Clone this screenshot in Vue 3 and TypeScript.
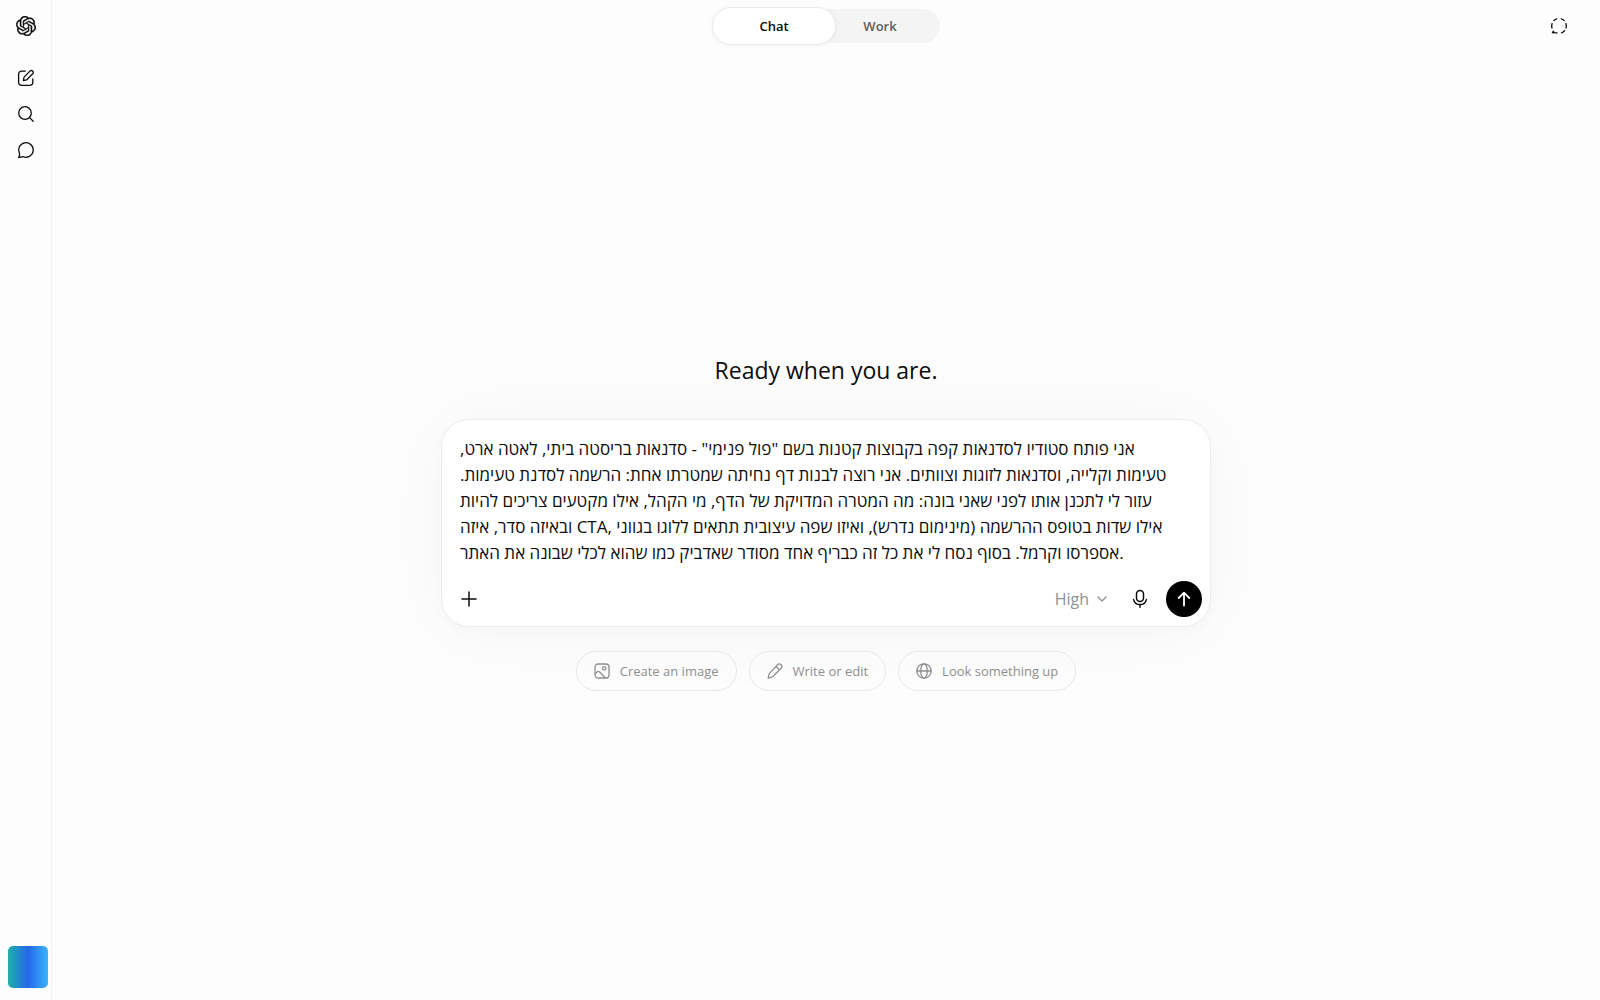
<script setup lang="ts">
import { ref } from 'vue'

type Mode = 'Chat' | 'Work'

const modes: Mode[] = ['Chat', 'Work']
const mode = ref<Mode>('Chat')

const prompt = ref(
  [
    'אני פותח סטודיו לסדנאות קפה בקבוצות קטנות בשם "פול פנימי" - סדנאות בריסטה ביתי, לאטה ארט,',
    'טעימות וקלייה, וסדנאות לזוגות וצוותים. אני רוצה לבנות דף נחיתה שמטרתו אחת: הרשמה לסדנת טעימות.',
    'עזור לי לתכנן אותו לפני שאני בונה: מה המטרה המדויקת של הדף, מי הקהל, אילו מקטעים צריכים להיות',
    'ובאיזה סדר, איזה CTA, אילו שדות בטופס ההרשמה (מינימום נדרש), ואיזו שפה עיצובית תתאים ללוגו בגווני',
    'אספרסו וקרמל. בסוף נסח לי את כל זה כבריף אחד מסודר שאדביק כמו שהוא לכלי שבונה את האתר.',
  ].join(' '),
)
</script>

<template>
  <div class="app">
    <aside class="sidebar">
      <a class="side-item logo" href="#" aria-label="Home">
        <svg width="20" height="20" viewBox="0 0 24 24" fill="currentColor" stroke="currentColor" stroke-width="0.4">
          <path d="M22.2819 9.8211a5.9847 5.9847 0 0 0-.5157-4.9108 6.0462 6.0462 0 0 0-6.5098-2.9A6.0651 6.0651 0 0 0 4.9807 4.1818a5.9847 5.9847 0 0 0-3.9977 2.9 6.0462 6.0462 0 0 0 .7427 7.0966 5.98 5.98 0 0 0 .511 4.9107 6.051 6.051 0 0 0 6.5146 2.9001A5.9847 5.9847 0 0 0 13.2599 24a6.0557 6.0557 0 0 0 5.7718-4.2058 5.9894 5.9894 0 0 0 3.9977-2.9001 6.0557 6.0557 0 0 0-.7475-7.0729zm-9.022 12.6081a4.4755 4.4755 0 0 1-2.8764-1.0408l.1419-.0804 4.7783-2.7582a.7948.7948 0 0 0 .3927-.6813v-6.7369l2.02 1.1686a.071.071 0 0 1 .038.052v5.5826a4.504 4.504 0 0 1-4.4945 4.4944zm-9.6607-4.1254a4.4708 4.4708 0 0 1-.5346-3.0137l.142.0852 4.783 2.7582a.7712.7712 0 0 0 .7806 0l5.8428-3.3685v2.3324a.0804.0804 0 0 1-.0332.0615L9.74 19.9502a4.4992 4.4992 0 0 1-6.1408-1.6464zM2.3408 7.8956a4.485 4.485 0 0 1 2.3655-1.9728V11.6a.7664.7664 0 0 0 .3879.6765l5.8144 3.3543-2.0201 1.1685a.0757.0757 0 0 1-.071 0l-4.8303-2.7865A4.504 4.504 0 0 1 2.3408 7.872zm16.5963 3.8558L13.1038 8.364 15.1192 7.2a.0757.0757 0 0 1 .071 0l4.8303 2.7913a4.4944 4.4944 0 0 1-.6765 8.1042v-5.6772a.79.79 0 0 0-.407-.667zm2.0107-3.0231l-.142-.0852-4.7735-2.7818a.7759.7759 0 0 0-.7854 0L9.409 9.2297V6.8974a.0662.0662 0 0 1 .0284-.0615l4.8303-2.7866a4.4992 4.4992 0 0 1 6.6802 4.66zM8.3065 12.863l-2.02-1.1638a.0804.0804 0 0 1-.038-.0567V6.0742a4.4992 4.4992 0 0 1 7.3757-3.4537l-.142.0805L8.704 5.459a.7948.7948 0 0 0-.3927.6813zm1.0976-2.3654l2.602-1.4998 2.6069 1.4998v2.9994l-2.5974 1.4997-2.6067-1.4997Z" />
        </svg>
      </a>
      <nav class="side-nav">
        <button class="side-item" type="button" aria-label="New chat">
          <svg class="line" width="20" height="20" viewBox="0 0 20 20">
            <path d="M9.2 3.2H5.6A3 3 0 0 0 2.6 6.2v8.2a3 3 0 0 0 3 3h8.2a3 3 0 0 0 3-3v-3.6" />
            <path d="M13.9 3.1a1.9 1.9 0 0 1 2.8 2.7l-5.4 5.5c-.4.4-1 .7-1.6.8l-2.3.4.4-2.4c.1-.6.4-1.1.8-1.5z" />
          </svg>
        </button>
        <button class="side-item" type="button" aria-label="Search chats">
          <svg class="line" width="20" height="20" viewBox="0 0 20 20">
            <circle cx="9" cy="9" r="6.3" />
            <path d="M13.6 13.6l3.600 3.600" />
          </svg>
        </button>
        <button class="side-item" type="button" aria-label="Chats">
          <svg class="line" width="20" height="20" viewBox="0 0 20 20">
            <path d="M3.5 13.4A7.3 7.3 0 1 1 6.700 16.500C5.500 17.300 4.200 17.500 2.600 17.300C3.500 16.200 3.900 14.800 3.500 13.400z" />
          </svg>
        </button>
      </nav>
      <button class="avatar" type="button" aria-label="Account"></button>
    </aside>

    <main class="main">
      <header class="topbar">
        <div class="switch">
          <button
            v-for="m in modes"
            :key="m"
            type="button"
            class="switch-item"
            :class="{ active: mode === m }"
            @click="mode = m"
          >{{ m }}</button>
        </div>
        <button class="temp" type="button" aria-label="Temporary chat">
          <svg class="line" width="20" height="20" viewBox="0 0 20 20">
            <path d="M7.700 2.900A7.300 7.300 0 0 0 4.900 4.500M3.100 7.500A7.300 7.300 0 0 0 3 12M12.300 2.900A7.300 7.300 0 0 1 15.100 4.500M16.900 7.500A7.300 7.300 0 0 1 17 12M15.600 14.700A7.300 7.300 0 0 1 12.500 16.800M8 16.900L3.400 16.700L4.200 15.300L5.200 16.500" />
          </svg>
        </button>
      </header>

      <section class="stage">
        <h1 class="title">Ready when you are.</h1>

        <form class="composer" @submit.prevent>
          <textarea v-model="prompt" class="prompt" rows="5" dir="ltr" spellcheck="false" aria-label="Message"></textarea>
          <div class="tools">
            <button class="tool" type="button" aria-label="Add files">
              <svg class="line bold" width="20" height="20" viewBox="0 0 20 20">
                <path d="M10 3v14M3 10h14" />
              </svg>
            </button>
            <div class="tools-end">
              <button class="effort" type="button">
                High
                <svg class="line" width="12" height="12" viewBox="0 0 12 12">
                  <path d="M2 4l4 4 4-4" />
                </svg>
              </button>
              <button class="tool" type="button" aria-label="Dictate">
                <svg class="line bold" width="20" height="20" viewBox="0 0 20 20">
                  <rect x="6.500" y="1.600" width="7" height="11" rx="3.500" />
                  <path d="M3.600 10.600a6.600 6.600 0 0 0 12.800 0M10 15.400v2.800" />
                </svg>
              </button>
              <button class="send" type="submit" aria-label="Send">
                <svg width="20" height="20" viewBox="0 0 20 20">
                  <path d="M10 16.500V4M4.700 9L10 3.700L15.300 9" />
                </svg>
              </button>
            </div>
          </div>
        </form>

        <div class="chips">
          <button class="chip" type="button">
            <svg class="line" width="16" height="16" viewBox="0 0 16 16">
              <rect x="1" y="1" width="14" height="14" rx="3" />
              <circle cx="10.200" cy="5.400" r="1.700" />
              <path d="M1.200 10.400l1.800-1.500a2 2 0 0 1 2.600.1l5.600 5.800" />
            </svg>
            Create an image
          </button>
          <button class="chip" type="button">
            <svg class="line" width="16" height="16" viewBox="0 0 16 16">
              <path d="M10.600 1.700a2.300 2.300 0 0 1 3.500 3.500l-7.900 8c-.4.400-.9.700-1.500.9l-3.500 1 .8-3.700c.1-.6.400-1.100.9-1.500zM9 3.500l3.400 3.400" />
            </svg>
            Write or edit
          </button>
          <button class="chip" type="button">
            <svg class="line" width="16" height="16" viewBox="0 0 16 16">
              <circle cx="8" cy="8" r="7.200" />
              <ellipse cx="8" cy="8" rx="3.300" ry="7.200" />
              <path d="M1 8h14" />
            </svg>
            Look something up
          </button>
        </div>
      </section>
    </main>
  </div>
</template>

<style>
body {
  margin: 0;
  background: #fdfdfd;
}
</style>

<style scoped>
.app {
  display: flex;
  min-height: 100vh;
  background: #fdfdfd;
  color: #0d0d0d;
  font-family: 'Open Sans', 'Noto Sans', sans-serif;
}

button {
  display: flex;
  align-items: center;
  justify-content: center;
  box-sizing: border-box;
  padding: 0;
  border: 0;
  background: none;
  color: inherit;
  font: inherit;
  cursor: pointer;
}

.line {
  fill: none;
  stroke: currentColor;
  stroke-width: 1.3;
  stroke-linecap: round;
  stroke-linejoin: round;
}

.line.bold {
  stroke-width: 1.5;
}

.sidebar {
  display: flex;
  flex-direction: column;
  box-sizing: border-box;
  width: 52px;
  padding: 8px 0 12px 8px;
  border-right: 1px solid #f2f2f2;
}

.side-nav {
  margin-top: 16px;
}

.side-item {
  display: flex;
  align-items: center;
  justify-content: center;
  width: 36px;
  height: 36px;
  color: #0d0d0d;
}

.avatar {
  width: 40px;
  height: 42px;
  margin-top: auto;
  border-radius: 5px;
  background: linear-gradient(90deg, #1fb0a6 0%, #2468ea 50%, #3cb4fa 100%);
}

.main {
  display: flex;
  flex: 1;
  flex-direction: column;
  min-width: 0;
}

.topbar {
  display: grid;
  grid-template-columns: 1fr auto 1fr;
  align-items: center;
  height: 52px;
}

.switch {
  display: flex;
  grid-column: 2;
  align-items: center;
  height: 34px;
  border-radius: 17px;
  background: #f4f4f4;
}

.switch-item {
  width: 104px;
  height: 38px;
  padding-right: 16px;
  border-radius: 19px;
  color: #5d5d5d;
  font-size: 13px;
  font-weight: 600;
}

.switch-item.active {
  width: 124px;
  padding-right: 0;
  border: 1px solid #ebebeb;
  background: #fff;
  box-shadow: 0 1px 6px rgba(0, 0, 0, 0.04);
  color: #0d0d0d;
}

.temp {
  width: 36px;
  height: 36px;
  margin-right: 23px;
  justify-self: end;
}

.stage {
  display: flex;
  flex: 1;
  flex-direction: column;
  align-items: center;
  justify-content: center;
  padding: 0 24px 8px;
}

.title {
  margin: 0 0 33px;
  font-size: 23px;
  font-weight: 400;
  line-height: 32px;
}

.composer {
  box-sizing: border-box;
  width: 100%;
  max-width: 770px;
  padding: 16px 8px 9px 9px;
  border: 1px solid #ededed;
  border-radius: 28px;
  background: #fff;
  box-shadow: 0 4px 12px rgba(0, 0, 0, 0.02), 0 4px 80px 8px rgba(0, 0, 0, 0.03);
}

.prompt {
  display: block;
  box-sizing: border-box;
  width: 100%;
  margin: 0 0 15px;
  padding: 0 20px 0 9px;
  border: 0;
  outline: 0;
  overflow: hidden;
  resize: none;
  background: none;
  color: #0d0d0d;
  font: inherit;
  font-size: 17px;
  line-height: 26px;
}

.tools,
.tools-end {
  display: flex;
  align-items: center;
}

.tools {
  justify-content: space-between;
}

.tool,
.send {
  width: 36px;
  height: 36px;
}

.effort {
  gap: 7px;
  height: 36px;
  margin-right: 14px;
  color: #8f8f8f;
  font-size: 16px;
}

.send {
  margin-left: 8px;
  border-radius: 50%;
  background: #000;
}

.send path {
  fill: none;
  stroke: #fff;
  stroke-width: 1.8;
  stroke-linecap: round;
  stroke-linejoin: round;
}

.chips {
  display: flex;
  flex-wrap: wrap;
  gap: 12px;
  margin-top: 24px;
}

.chip {
  gap: 10px;
  height: 40px;
  padding: 0 17px;
  border: 1px solid #e8e8e8;
  border-radius: 20px;
  color: #8f8f8f;
  font-size: 13px;
}
</style>
